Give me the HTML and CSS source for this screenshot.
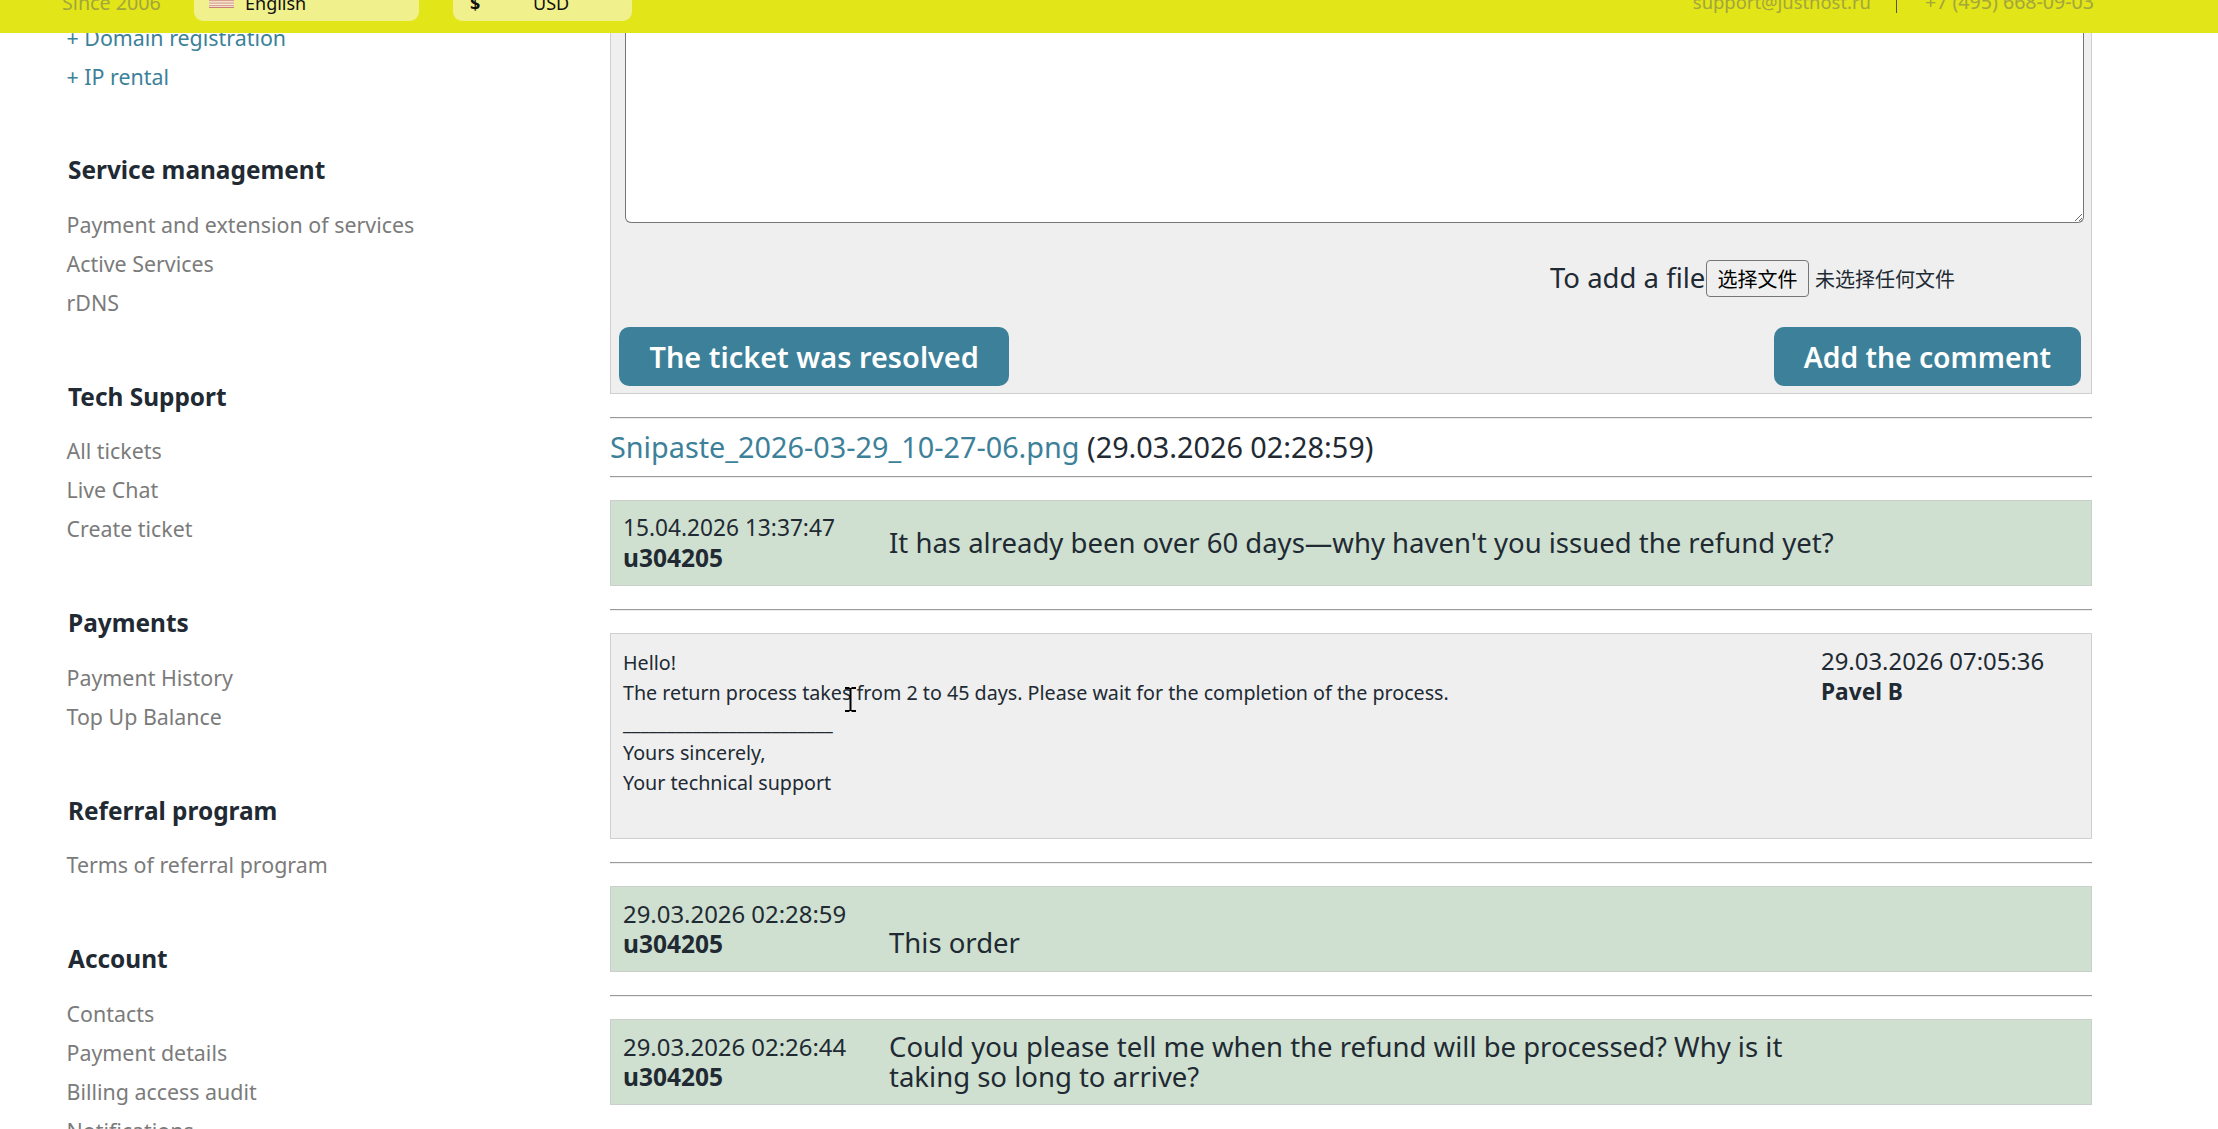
FILE: index.html
```html
<!DOCTYPE html>
<html lang="en">
<head>
<meta charset="utf-8">
<title>Ticket</title>
<link rel="stylesheet" href="styles.css">
</head>
<body>
<header class="topbar">
  <span class="since">Since 2006</span>
  <div class="chip chip-lang">
    <svg class="flag" width="25" height="8" viewBox="0 0 25 8"><rect width="25" height="8" fill="#f6ecd8"/><rect y="0" width="25" height="1.2" fill="#d9a08c"/><rect y="2.5" width="25" height="1.2" fill="#d9a08c"/><rect y="5" width="25" height="1.2" fill="#d9a08c"/><rect y="7" width="25" height="1" fill="#c9807a"/></svg>
    <span>English</span>
  </div>
  <div class="chip chip-cur"><b>$</b><span>USD</span></div>
  <div class="contacts">
    <span class="mail">support@justhost.ru</span>
    <i class="divider"></i>
    <span class="phone">+7 (495) 668-09-03</span>
  </div>
</header>
<div class="page">
  <aside class="sidebar">
    <ul class="links accent">
      <li>+ Domain registration</li>
      <li>+ IP rental</li>
    </ul>
    <h3>Service management</h3>
    <ul class="links">
      <li>Payment and extension of services</li>
      <li>Active Services</li>
      <li>rDNS</li>
    </ul>
    <h3>Tech Support</h3>
    <ul class="links">
      <li>All tickets</li>
      <li>Live Chat</li>
      <li>Create ticket</li>
    </ul>
    <h3>Payments</h3>
    <ul class="links">
      <li>Payment History</li>
      <li>Top Up Balance</li>
    </ul>
    <h3>Referral program</h3>
    <ul class="links">
      <li>Terms of referral program</li>
    </ul>
    <h3>Account</h3>
    <ul class="links">
      <li>Contacts</li>
      <li>Payment details</li>
      <li>Billing access audit</li>
      <li>Notifications</li>
    </ul>
  </aside>
  <main class="content">
    <form class="reply">
      <textarea class="reply-text"></textarea>
      <div class="file-row">
        <span class="file-label">To add a file</span>
        <button type="button" class="file-btn">选择文件</button>
        <span class="file-none">未选择任何文件</span>
      </div>
      <div class="actions">
        <button type="button" class="action">The ticket was resolved</button>
        <button type="button" class="action action-add">Add the comment</button>
      </div>
    </form>
    <hr>
    <div class="attachment"><a class="file-link">Snipaste_2026-03-29_10-27-06.png</a> (29.03.2026 02:28:59)</div>
    <hr class="flush">
    <div class="msg user">
      <div class="meta meta-narrow">15.04.2026 13:37:47<br><b>u304205</b></div>
      <div class="text">It has already been over 60 days—why haven't you issued the refund yet?</div>
    </div>
    <hr>
    <div class="msg staff">
      <div class="body">Hello!<br>The return process takes from 2 to 45 days. Please wait for the completion of the process.<br>________________________<br>Yours sincerely,<br>Your technical support</div>
      <div class="meta">29.03.2026 07:05:36<br><b>Pavel B</b></div>
    </div>
    <hr>
    <div class="msg user">
      <div class="meta">29.03.2026 02:28:59<br><b>u304205</b></div>
      <div class="text text-low">This order</div>
    </div>
    <hr>
    <div class="msg user">
      <div class="meta">29.03.2026 02:26:44<br><b>u304205</b></div>
      <div class="text">Could you please tell me when the refund will be processed? Why is it taking so long to arrive?</div>
    </div>
    <svg class="cursor" width="13" height="25" viewBox="0 0 13 25"><path d="M1 1h4.500M7.500 1H12M6.500 1v23M1 24h4.500M7.500 24H12" fill="none" stroke="#000" stroke-width="2"/></svg>
  </main>
</div>
</body>
</html>
```

FILE: styles.css
```css
* { box-sizing: border-box; }
html, body { margin: 0; height: 1129px; overflow: hidden; background: #fff; }
body { font-family: "Noto Sans", sans-serif; color: #212a33; }

.topbar {
  position: fixed; top: 0; left: 0; right: 0; height: 33px; z-index: 5;
  background: #e2e517; overflow: hidden;
  display: flex; align-items: flex-end;
  padding: 0 124px 12px 62px;
  font-size: 18px; line-height: 24px;
}
.since { color: #a3a63d; width: 132px; flex: none; font-size: 19.7px; margin-bottom: 6px; }
.chip {
  flex: none; height: 40px; background: #f0f08c; border-radius: 0 0 9px 9px;
  display: flex; align-items: flex-end; color: #111; padding-bottom: 6px;
}
.chip-lang { width: 225px; padding-left: 15px; margin-right: 34px; }
.flag { margin: 0 11px 7px 0; align-self: flex-end; }
.chip-cur { width: 179px; padding-left: 17px; }
.chip-cur b { width: 63px; font-weight: 700; }
.contacts { margin-left: auto; display: flex; align-items: flex-end; color: #a3a63d; }
.mail { font-size: 18.4px; margin-bottom: 7px; }
.phone { font-size: 19.6px; margin-bottom: 7px; }
.divider { width: 1px; height: 26px; background: #555; margin: 0 28px 8px 25px; }

.page { display: flex; padding-left: 66px; height: 1129px; }
.sidebar { width: 544px; flex: none; padding-top: 18px; }
.sidebar h3 { margin: 50px 0 10.500px 2px; font-size: 24.400px; line-height: 48px; font-weight: 700; color: #212a33; }
.links { list-style: none; margin: 0; padding: 0 0 1px 0.500px; font-size: 21.400px; line-height: 39px; color: #7b7b7b; }
.links.accent { color: #3c8199; padding-bottom: 0; }

.content { position: relative; width: 1482px; flex: none; }
.reply {
  background: #efefef; border: 1px solid #cfcfcf; border-top: 0;
  padding: 0 10px 6px 8px; height: 394px;
}
.reply-text {
  display: block; width: 1459px; height: 223px; margin: 0 0 0 6px;
  background: #fff; border: 1px solid #757575; border-top: 0; border-radius: 0 0 6px 6px; resize: vertical;
}
.file-row {
  display: flex; align-items: center; height: 38px; margin-top: 36px; padding-left: 931px;
}
.file-label { font-size: 27.500px; line-height: 36px; width: 156px; flex: none; white-space: nowrap; }
.file-btn {
  font: 20px "Noto Sans CJK SC", sans-serif; width: 103px; height: 37px; padding: 0; color: #000;
  background: #efefef; border: 1px solid #767676; border-radius: 4px; flex: none;
}
.file-none { font: 20px "Noto Sans CJK SC", sans-serif; margin-left: 6px; color: #212a33; }
.actions { display: flex; justify-content: space-between; margin-top: 30px; }
.action {
  height: 59px; padding: 0 30.500px; background: #3c8199; color: #fff; border: 0; border-radius: 10px;
  font: 600 28.900px "Noto Sans", sans-serif;
}
.action-add { font-size: 28.300px; padding: 0 30px; }

hr { display: block; margin: 23px 0 22px; height: 2px; border: 0; border-top: 1px solid #9a9a9a; border-bottom: 1px solid #eee; }
hr.flush { margin-top: 0; }
.attachment { height: 57px; margin-top: -22px; font-size: 28.800px; line-height: 55px; }
.file-link { color: #3c8199; }

.msg { border: 1px solid #c9cfc9; display: flex; }
.msg.user { background: #cfe0d0; height: 86px; align-items: center; padding: 0 12px; }
.msg.staff { background: #efefef; border-color: #cfcfcf; height: 206px; padding: 14px 12px 0; justify-content: space-between; }
.meta { font-size: 23.900px; line-height: 30px; width: 266px; flex: none; }
.meta-narrow { font-size: 22.700px; }
.user .meta b { font-size: 24.500px; }
.staff .meta b { font-size: 22.700px; }
.meta b { font-weight: 700; }
.text { font-size: 27.500px; line-height: 30px; max-width: 955px; }
.text-low { align-self: flex-end; margin-bottom: 13px; }
.body { font-size: 19.700px; line-height: 30px; }
.staff .meta { margin-right: -1px; width: 259px; margin-top: -2px; }

.cursor { position: absolute; left: 234px; top: 687px; }
```
